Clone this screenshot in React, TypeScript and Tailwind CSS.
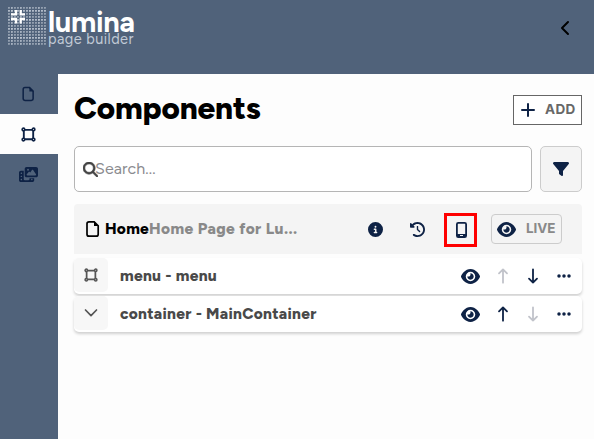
import React from "react";
import { FaCircleInfo, FaClockRotateLeft, FaEye, FaEllipsis, FaFilter, FaPhotoFilm, FaMagnifyingGlass } from "react-icons/fa6";

const lines = Array.from({ length: 13 }, (_, i) => i);

function FileIcon({ className }: { className: string }) {
  return (
    <svg viewBox="0 0 14 18" fill="none" className={className}>
      <path d="M3 1.8h5.2L12.2 5.8V14.2q0 2-2 2H3q-2 0-2-2V3.8q0-2 2-2Z" stroke="currentColor" strokeWidth="1.7" />
      <path d="M8 1.5v4.6h4.6Z" fill="currentColor" />
    </svg>
  );
}

function FrameIcon({ className }: { className: string }) {
  return (
    <svg viewBox="0 0 16 16" fill="none" stroke="currentColor" strokeWidth="2" className={className}>
      <path d="M4 3h8M4 13h8M3 4v8M13 4v8" />
      <g strokeWidth="1.7">
        <circle cx="2.6" cy="2.6" r="1.4" />
        <circle cx="13.4" cy="2.6" r="1.4" />
        <circle cx="2.6" cy="13.4" r="1.4" />
        <circle cx="13.4" cy="13.4" r="1.4" />
      </g>
    </svg>
  );
}

function Arrow({ down, className }: { down?: boolean; className: string }) {
  return (
    <svg viewBox="0 0 12 16" fill="none" stroke="currentColor" strokeWidth="1.8" strokeLinecap="round" strokeLinejoin="round" className={"h-4 w-3 " + className}>
      <path d={down ? "M6 1.3v13.2M2 10.6l4 4 4-4" : "M6 14.7V1.5M2 5.4l4-4 4 4"} />
    </svg>
  );
}

function Logo() {
  return (
    <div className="flex pl-2 pt-[7px]">
      <svg viewBox="0 0 38 38" className="h-[38px] w-[38px]">
        <g stroke="#d5dce6" strokeWidth="1.3" strokeDasharray="2 1">
          {lines.map((i) => (
            <path key={i} d={`M0 ${0.8 + i * 3}H38`} opacity={i % 3 === 1 ? 0.9 : 0.55} />
          ))}
          {lines.map((i) => (
            <path key={i} d={`M${0.8 + i * 3} 0V38`} opacity={i % 3 === 1 ? 0.5 : 0.2} />
          ))}
        </g>
        <path d="M3 7.3H8V3M12.7 3V7.3H17M3 12H8V16.5M12.7 16.5V12H17" fill="none" stroke="#fff" strokeWidth="2.3" />
      </svg>
      <div className="ml-[2px] flex flex-col whitespace-nowrap">
        <span className="h-[27px] font-[Figtree,Lato,sans-serif] text-[29px] font-bold leading-[30px] tracking-[-0.3px] text-white">lumina</span>
        <span className="h-3 font-[Figtree,Lato,sans-serif] text-[14.5px] leading-[11px] tracking-[0.45px] text-[#c1cad6]">page builder</span>
      </div>
    </div>
  );
}

function ComponentRow({ label, open }: { label: string; open?: boolean }) {
  return (
    <div className="flex h-9 items-center rounded-[5px] bg-white text-[#0e2245] shadow-[0_2px_3px_rgba(0,0,0,0.18)]">
      <div className="mb-[2px] flex h-[34px] w-[34px] items-center justify-center rounded-[5px] bg-[#f7f7f7] text-[#555]">
        {open ? (
          <svg viewBox="0 0 14 10" fill="none" stroke="currentColor" strokeWidth="1.7" strokeLinecap="round" strokeLinejoin="round" className="h-[10px] w-[14px]">
            <path d="M1.5 2 7 7.6 12.5 2" />
          </svg>
        ) : (
          <FrameIcon className="h-[14px] w-[14px]" />
        )}
      </div>
      <span className="ml-3 flex-1 whitespace-nowrap text-[15.5px] font-extrabold tracking-[0.3px] text-[#494949]">{label}</span>
      <FaEye className="h-[17px] w-[19px]" />
      <Arrow className={open ? "ml-[17px]" : "ml-[17px] text-[#c1c3ca]"} />
      <Arrow down className={open ? "ml-[18px] text-[#c1c3ca]" : "ml-[18px]"} />
      <FaEllipsis className="ml-[17px] mr-[10px] h-4 w-4" />
    </div>
  );
}

export default function App() {
  return (
    <div className="flex h-[439px] w-[594px] flex-col overflow-hidden bg-[#50627a] font-[Figtree,Inter,sans-serif]">
      <header className="flex h-[74px] justify-between">
        <Logo />
        <svg viewBox="0 0 10 16" fill="none" stroke="#000" strokeWidth="2" strokeLinecap="round" strokeLinejoin="round" className="mr-6 mt-5 h-4 w-[10px]">
          <path d="M8 2 2 8l6 6" />
        </svg>
      </header>
      <div className="flex flex-1">
        <nav className="flex w-[58px] flex-col text-[#0e2245]">
          <div className="flex h-10 items-center justify-center pr-[1px]">
            <FileIcon className="h-4 w-[13px]" />
          </div>
          <div className="flex h-10 items-center justify-center bg-[#fdfdfd] pr-[2px]">
            <FrameIcon className="h-[15px] w-[15px]" />
          </div>
          <div className="flex h-10 items-center justify-center pr-[2px]">
            <FaPhotoFilm className="h-[17px] w-[19px]" />
          </div>
        </nav>
        <main className="flex flex-1 flex-col bg-[#fdfdfd] pl-4 pr-3">
          <div className="flex h-[72px] items-center justify-between">
            <h1 className="mb-[3px] text-[31.5px] font-extrabold tracking-[-0.15px] text-black">Components</h1>
            <button className="flex h-[30px] w-[69px] items-center border border-[#666] bg-white pl-[7px]">
              <svg viewBox="0 0 14 14" stroke="#0e2245" strokeWidth="2" strokeLinecap="round" className="h-[14px] w-[14px]">
                <path d="M7 1v12M1 7h12" />
              </svg>
              <span className="ml-[10px] mb-px font-[Inter,sans-serif] text-[13.5px] font-bold tracking-[0.3px] text-[#686868]">ADD</span>
            </button>
          </div>
          <div className="flex h-[46px] gap-2">
            <div className="flex flex-1 items-center rounded-[5px] border border-[#b5b5b5] bg-white pl-2">
              <FaMagnifyingGlass className="h-[15px] w-[15px] text-[#444]" stroke="currentColor" strokeWidth="20" />
              <span className="-ml-[3px] text-[16px] tracking-[0.1px] text-[#8b8b8f]">Search...</span>
            </div>
            <button className="flex w-[42px] items-center justify-center rounded-[5px] border border-[#ccc] bg-[#f4f4f4]">
              <FaFilter className="h-4 w-4 text-[#0e2245]" />
            </button>
          </div>
          <div className="mt-3 flex h-[50px] items-center rounded-t-[4px] bg-[#f4f4f4] text-[#0e2245]">
            <FileIcon className="ml-3 h-[18px] w-[14px] text-black" />
            <div className="ml-[5px] flex-1 whitespace-nowrap text-[15.5px] font-extrabold">
              <span className="tracking-[0.25px] text-black">Home</span>
              <span className="tracking-[0.42px] text-[#898989]">Home Page for Lu...</span>
            </div>
            <FaCircleInfo className="h-[15px] w-[15px]" />
            <FaClockRotateLeft className="ml-[27px] h-[15px] w-[15px]" />
            <div className="ml-[19px] mt-px flex h-[34px] w-[33px] items-center justify-center border-[3px] border-[#fe0000]">
              <svg viewBox="0 0 11 16" className="ml-px h-4 w-[11px]" fill="none">
                <rect x="0.9" y="0.9" width="9.2" height="14.2" rx="1.4" stroke="currentColor" strokeWidth="1.8" />
                <path d="M1 12h9v3H1Z" fill="currentColor" />
                <path d="M4 13.5h3" stroke="#f4f4f4" />
              </svg>
            </div>
            <button className="ml-[14px] mr-5 flex h-[30px] w-[71px] items-center rounded-[4px] border border-[#ccc] pl-[5px]">
              <FaEye className="h-[17px] w-[19px]" />
              <span className="mb-px ml-[10px] font-[Inter,sans-serif] text-[13.5px] font-bold tracking-[-0.1px] text-[#898989]">LIVE</span>
            </button>
          </div>
          <div className="mt-1 flex flex-col gap-[2px]">
            <ComponentRow label="menu - menu" />
            <ComponentRow label="container - MainContainer" open />
          </div>
        </main>
      </div>
    </div>
  );
}
